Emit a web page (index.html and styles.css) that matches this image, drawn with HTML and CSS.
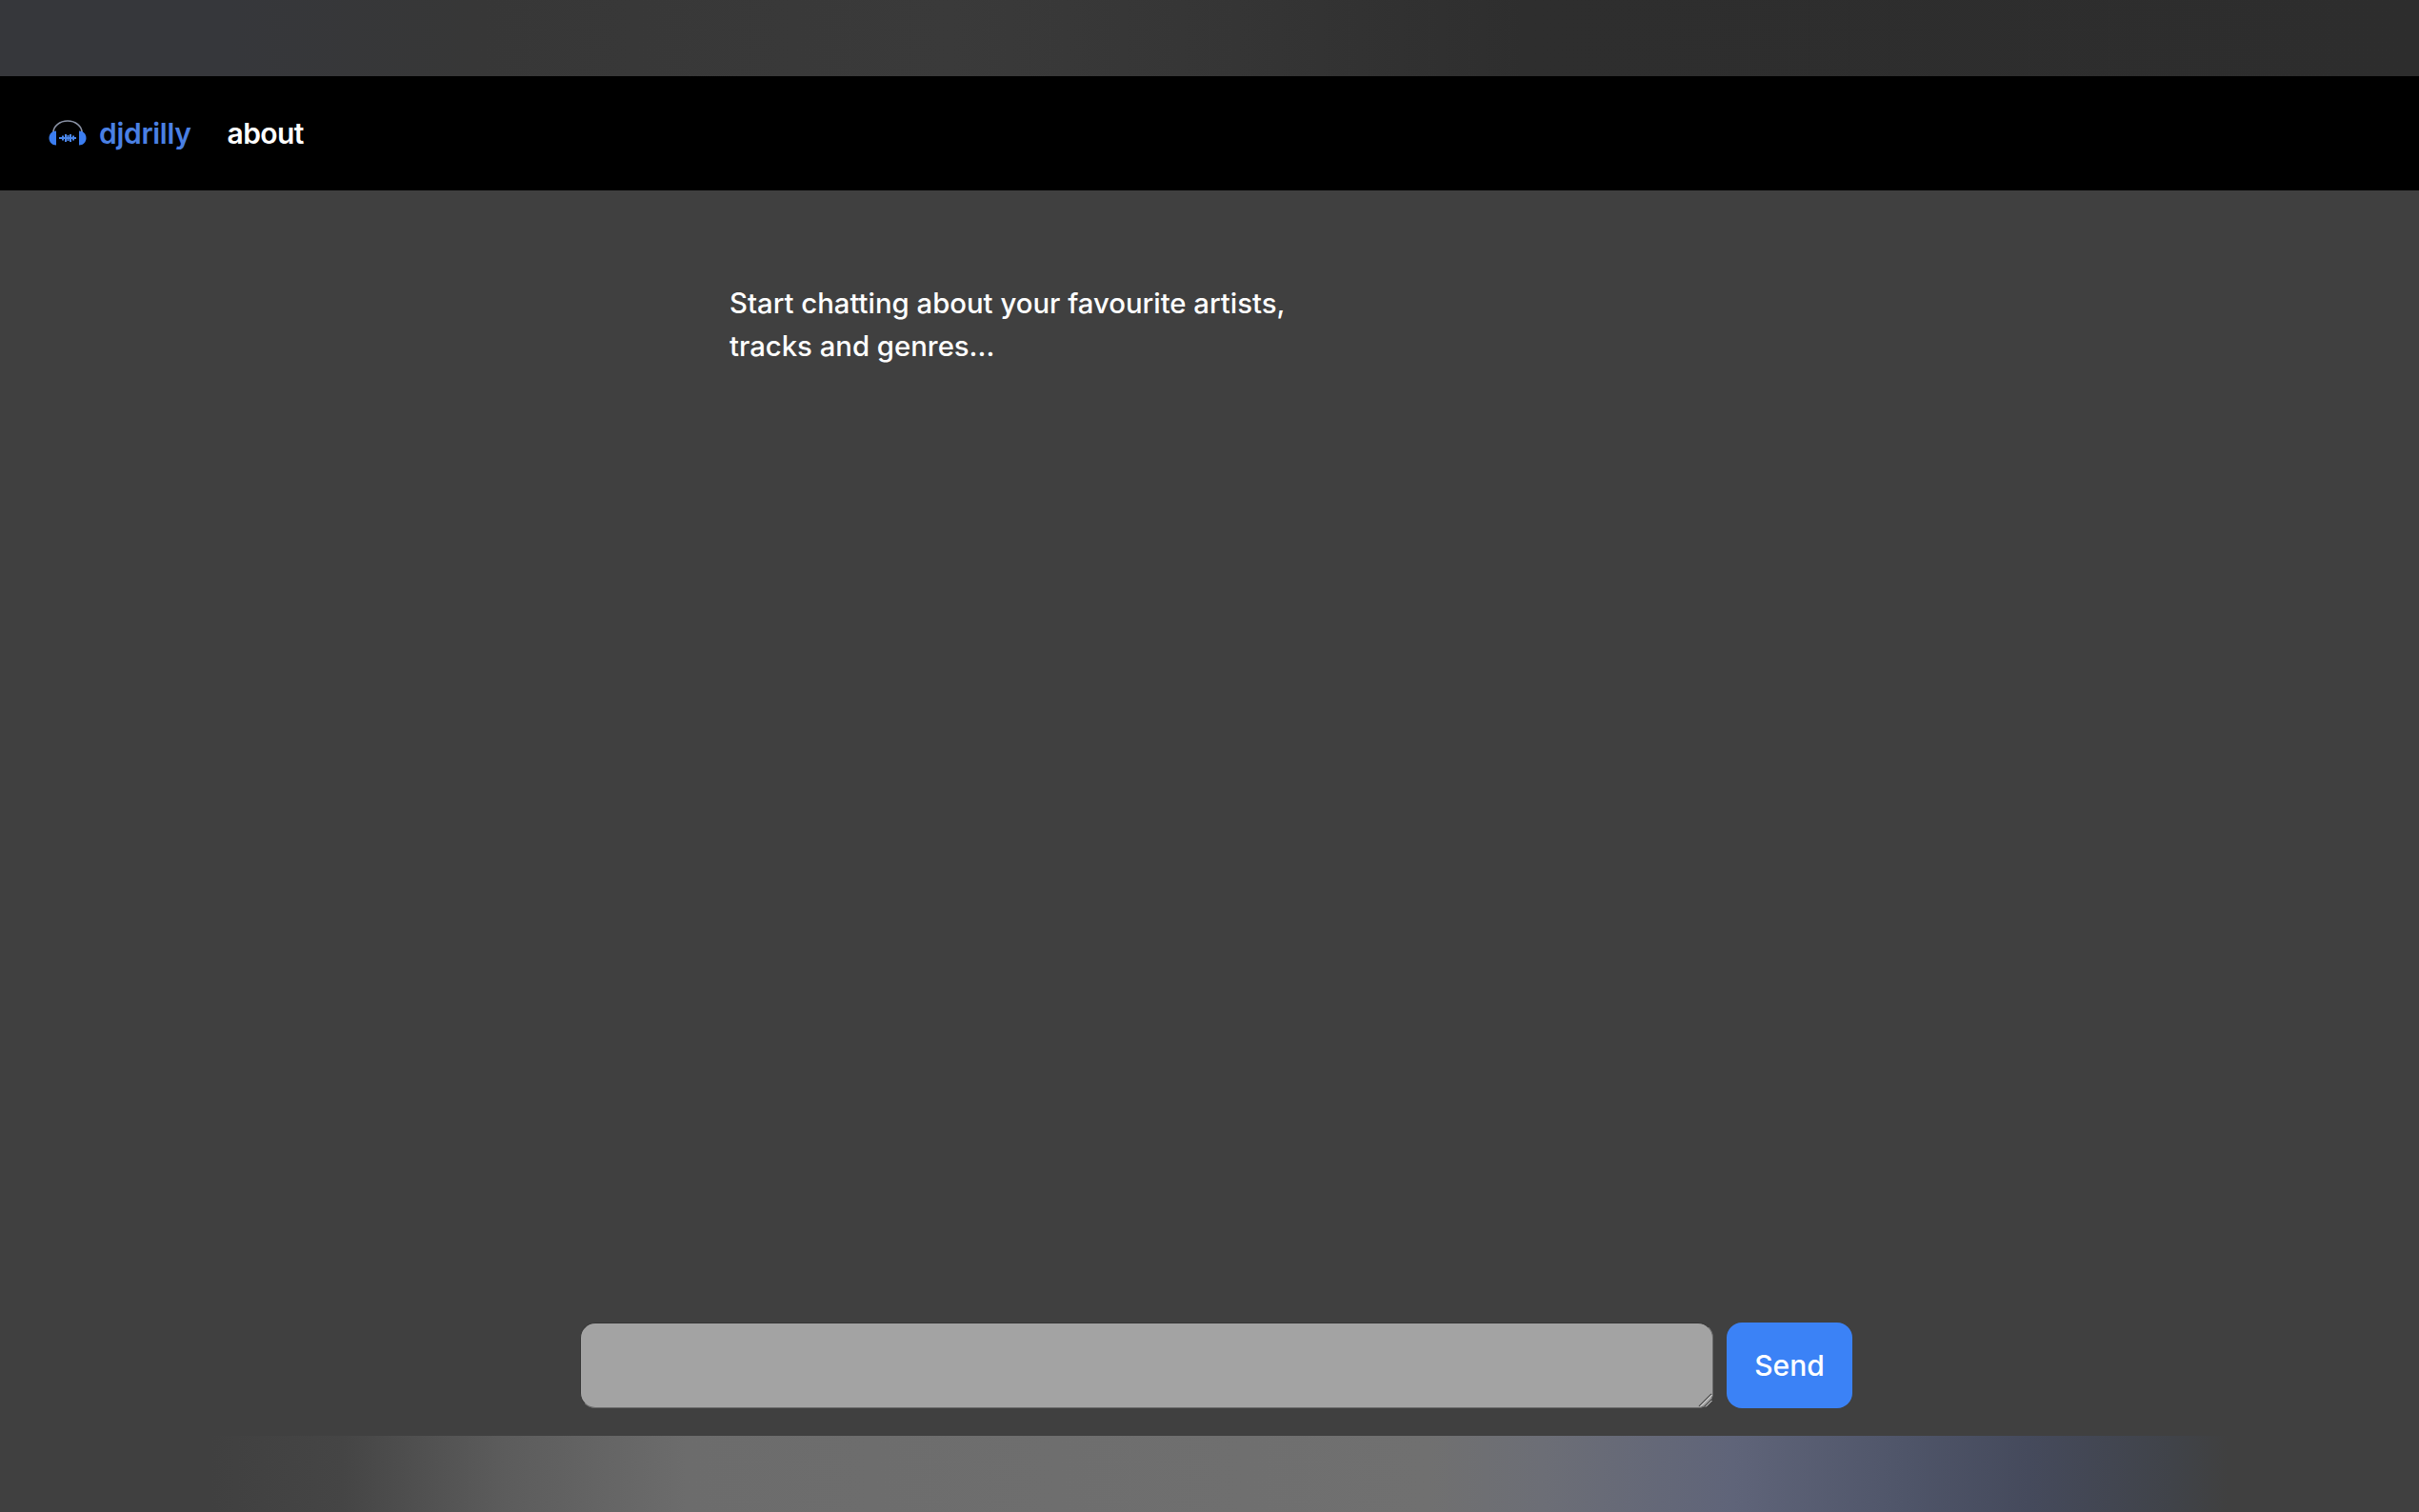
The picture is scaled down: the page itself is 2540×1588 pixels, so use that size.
FILE: index.html
```html
<!DOCTYPE html>
<html lang="en">
<head>
<meta charset="utf-8">
<title>djdrilly</title>
<link rel="stylesheet" href="styles.css">
</head>
<body>
<div class="band-top"></div>
<nav class="nav">
  <a class="brand" href="#">
    <svg class="logo" viewBox="0 0 40 28" width="40" height="28" aria-hidden="true">
      <path d="M5 14 V13 A15 12 0 0 1 35 13 V14" fill="none" stroke="#8b93a6" stroke-width="1.6"/>
      <path d="M8 11.5 V26.5 C3.5 26.5 0.5 23 0.5 19 C0.5 15 3.5 11.5 8 11.5 Z" fill="#3b7df0"/>
      <path d="M32 11.5 V26.5 C36.5 26.5 39.5 23 39.5 19 C39.5 15 36.5 11.5 32 11.5 Z" fill="#3b7df0"/>
      <path d="M11 19 H29 M15 16.5 V21.5 M18 15 V23 M20.5 16 V22 M23 15 V23 M26 16.5 V21.5" fill="none" stroke="#4a86ea" stroke-width="2"/>
    </svg>
    <span>djdrilly</span>
  </a>
  <a class="about" href="#">about</a>
</nav>
<main class="main">
  <div class="messages">
    <p class="hint">Start chatting about your favourite artists, tracks and genres...</p>
  </div>
  <form class="composer">
    <div class="input-wrap">
      <textarea class="input" aria-label="Message"></textarea>
      <svg class="grip" viewBox="0 0 16 16" width="16" height="16" aria-hidden="true">
        <path d="M2 15 L15 2 M8 15 L15 8" fill="none" stroke="#4a4a4a" stroke-width="1.2"/>
        <path d="M3 15.5 L15.5 3 M9 15.5 L15.5 9" fill="none" stroke="#e8e8e8" stroke-width="1"/>
      </svg>
    </div>
    <button class="send" type="button">Send</button>
  </form>
</main>
<div class="band-bottom"></div>
</body>
</html>
```
FILE: styles.css
```css
* { box-sizing: border-box; }
html, body { height: 100%; }
body {
  margin: 0;
  height: 100vh;
  display: flex;
  flex-direction: column;
  background: #404040;
  color: #fff;
  font-family: Inter, "Liberation Sans", sans-serif;
  overflow: hidden;
}
.band-top {
  height: 80px;
  flex: none;
  background: linear-gradient(90deg, #36373b 0, #36373b 240px, #373737 500px, #3a3a3a 1000px, #353535 1300px, #2e2e2e 1600px, #2d2d2d 2540px);
}
.nav {
  height: 120px;
  flex: none;
  background: #000;
  display: flex;
  align-items: center;
  padding-left: 51px;
  gap: 38px;
}
.brand {
  display: flex;
  align-items: center;
  gap: 13px;
  color: #4a80e4;
  font-size: 30px;
  font-weight: 600;
  letter-spacing: -0.3px;
  text-decoration: none;
}
.logo { flex: none; }
.about {
  color: #fff;
  font-size: 30px;
  font-weight: 600;
  letter-spacing: -0.6px;
  text-decoration: none;
}
.main {
  flex: 1;
  min-height: 0;
  display: flex;
  flex-direction: column;
  padding: 0 0 29px 609px;
}
.messages {
  flex: 1;
  padding: 96px 0 0 157px;
}
.hint {
  margin: 0;
  width: 620px;
  font-size: 29.3px;
  font-weight: 500;
  line-height: 45px;
}
.composer {
  display: flex;
  gap: 14px;
  height: 90px;
}
.input-wrap {
  position: relative;
  width: 1190px;
  height: 90px;
}
.input {
  display: block;
  width: 100%;
  height: 100%;
  border: 1px solid;
  border-color: #363636 #6a6a6a #6a6a6a #363636;
  border-radius: 16px;
  background: #a3a3a3;
  outline: 0;
  resize: none;
}
.grip {
  position: absolute;
  right: 1px;
  bottom: 1px;
}
.send {
  width: 132px;
  height: 90px;
  border: 0;
  border-radius: 16px;
  background: #3b82f6;
  color: #fff;
  font: 500 30px Inter, "Liberation Sans", sans-serif;
}
.band-bottom {
  height: 80px;
  flex: none;
  background: linear-gradient(90deg, #404040 0, #404040 220px, #454545 360px, #5c5c5c 530px, #6c6c6c 720px, #707070 1500px, #6c6e76 1620px, #5f6479 1820px, #4f5569 2000px, #454a5c 2130px, #404349 2280px, #404040 2340px);
}
```
